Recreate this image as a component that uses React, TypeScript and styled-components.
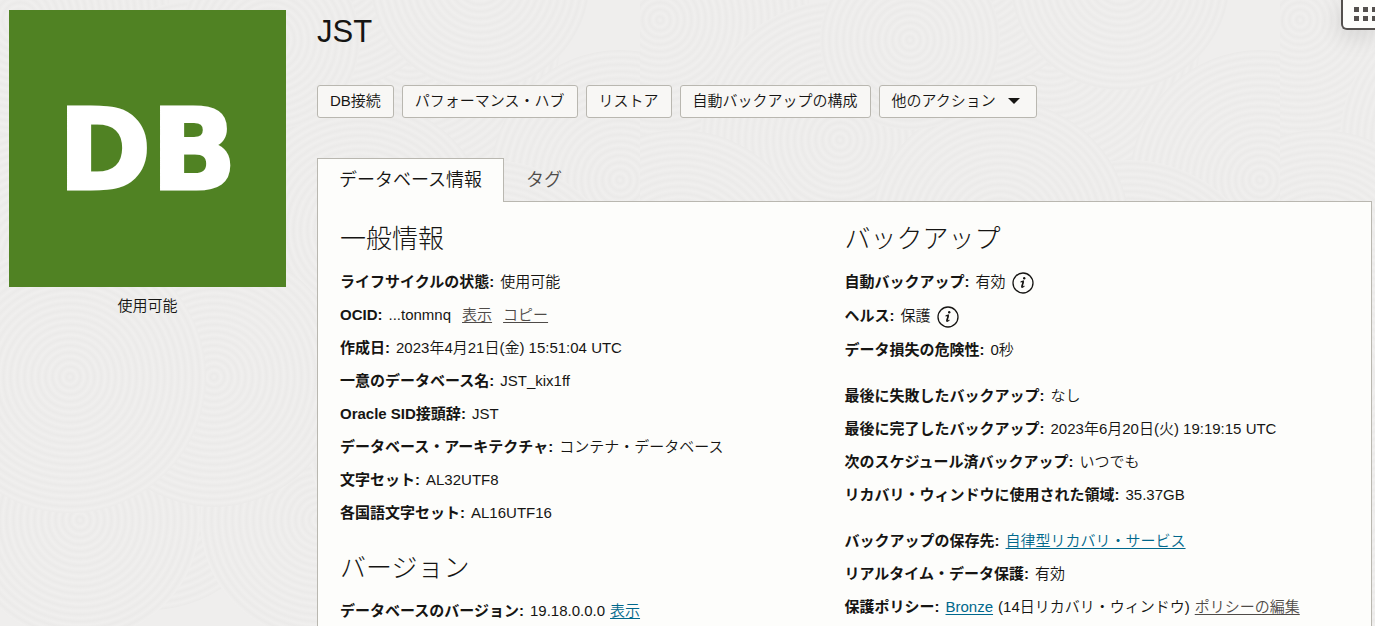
import React from 'react';
import styled, { createGlobalStyle } from 'styled-components';

type Disc = [number, number, number];

const DISCS: Disc[] = [
  [20, 20, 150], [410, 40, 150], [620, 180, 130], [330, -40, 130], [200, 140, 140],
  [490, 300, 140], [360, 230, 130], [40, 260, 130], [480, -20, 110], [150, 480, 130], [320, 520, 120],
  [80, 520, 120], [560, 500, 130], [430, 450, 120], [214, 377, 130], [70, 377, 136], [270, 40, 90],
];

const backdrop = `<svg xmlns="http://www.w3.org/2000/svg" width="640" height="626"><defs><radialGradient id="r" gradientUnits="userSpaceOnUse" cx="0" cy="0" r="7" spreadMethod="repeat"><stop offset="0" stop-color="#f0efee"/><stop offset=".5" stop-color="#ebeae9"/><stop offset="1" stop-color="#f0efee"/></radialGradient></defs>${DISCS.map(
  ([x, y, r]) => `<circle transform="translate(${x} ${y})" r="${r}" fill="url(#r)"/>`,
).join('')}</svg>`;

const GlobalStyle = createGlobalStyle`
  *, *::before, *::after { box-sizing: border-box; }
  body {
    margin: 0;
    color: #161513;
    background: #efeeed url("data:image/svg+xml,${encodeURIComponent(backdrop)}");
    font: 350 15px/33px "Liberation Sans", "Noto Sans CJK JP", sans-serif;
  }
  h1, h2, p, dl, dt, dd { margin: 0; }
`;

const Page = styled.div`
  display: grid;
  grid-template-columns: 277px minmax(0, 1fr);
  column-gap: 31px;
  padding: 10px 3px 0 9px;
`;

const Tile = styled.div`
  display: flex;
  align-items: center;
  justify-content: center;
  aspect-ratio: 1;
  padding-top: 2px;
  background: #508223;
  color: #fff;
  font: 700 112px/1 "DejaVu Sans", sans-serif;
  -webkit-text-stroke: 3px #fff;
`;

const Status = styled.p`
  padding-top: 2px;
  text-align: center;
`;

const Title = styled.h1`
  font-size: 31px;
  font-weight: 400;
  line-height: 44px;
`;

const Actions = styled.div`
  display: flex;
  gap: 8px;
  margin-top: 31px;
`;

const Button = styled.button`
  display: flex;
  align-items: center;
  gap: 12px;
  height: 33px;
  padding: 0 12px 2px;
  border: 1px solid #b9b7b0;
  border-radius: 3px;
  background: #f8f7f5;
  color: inherit;
  font: inherit;
  line-height: 29px;
`;

const Caret = styled.span`
  margin-right: 4px;
  border: 6px solid transparent;
  border-top-color: #161513;
  border-bottom: 0;
`;

const TabBar = styled.div`
  display: flex;
  margin-top: 40px;
`;

const Tab = styled.button<{ $active?: boolean }>`
  height: 44px;
  margin-bottom: -1px;
  padding: 0 21px;
  border: 1px solid ${(p) => (p.$active ? '#b9b7b0' : 'transparent')};
  border-bottom: 0;
  background: ${(p) => (p.$active ? '#fdfdfb' : 'transparent')};
  color: ${(p) => (p.$active ? '#161513' : '#4f4b48')};
  font: inherit;
  font-size: 18px;
`;

const Panel = styled.div`
  display: grid;
  grid-template-columns: 1fr 1fr;
  padding: 19px 22px 0;
  border: 1px solid #b9b7b0;
  border-bottom: 0;
  background: #fdfdfb;
`;

const Section = styled.section`
  & + & { margin-top: 21px; }
`;

const Heading = styled.h2`
  margin-bottom: 8px;
  font-size: 26px;
  font-weight: 300;
  line-height: 36px;
`;

const List = styled.dl`
  & + & { margin-top: 13px; }
`;

const Row = styled.div<{ $tall?: boolean }>`
  display: flex;
  gap: 6px;
  height: ${(p) => (p.$tall ? 34 : 33)}px;
  white-space: nowrap;
`;

const Term = styled.dt`
  font-weight: 700;
`;

const Detail = styled.dd`
  display: flex;
  gap: 5px;
`;

const Link = styled.a<{ $quiet?: boolean }>`
  color: ${(p) => (p.$quiet ? '#4f4b48' : '#00688c')};
  text-decoration: underline;
  text-underline-offset: 2px;
`;

const OcidLinks = styled.span`
  display: flex;
  gap: 11px;
  margin-left: 6px;
`;

const InfoButton = styled.button`
  display: flex;
  align-items: center;
  height: 36px;
  padding: 0;
  margin-left: 1px;
  border: 0;
  background: none;
  color: inherit;
`;

const Launcher = styled.button`
  position: fixed;
  top: 0;
  right: 0;
  width: 34px;
  height: 30px;
  padding: 0;
  border: 2px solid #54504e;
  border-width: 0 0 2px 2px;
  border-bottom-left-radius: 6px;
  background: #fdfdfb;
  box-shadow: 0 6px 24px rgba(0, 0, 0, 0.12);
  svg { display: block; }
`;

const Info = () => (
  <InfoButton aria-label="情報">
    <svg width="22" height="22" viewBox="0 0 22 22" fill="none" stroke="currentColor">
      <circle cx="11" cy="11" r="10" strokeWidth="1.3" />
      <circle cx="12.2" cy="6.2" r="1.2" fill="currentColor" stroke="none" />
      <path d="M8.6 10.2c.8-.6 1.7-.9 2.7-1.2L9.8 14.8c-.2 1.1 1 .7 2.6-1" strokeWidth="1.1" />
      <path d="M11.4 9.2L9.9 15" strokeWidth="1.5" />
    </svg>
  </InfoButton>
);

interface FieldProps {
  label: string;
  tall?: boolean;
  children: React.ReactNode;
}

const Field = ({ label, tall, children }: FieldProps) => (
  <Row $tall={tall}>
    <Term>{label}:</Term>
    <Detail>{children}</Detail>
  </Row>
);

export default function App() {
  return (
    <>
      <GlobalStyle />
      <Page>
        <aside>
          <Tile>DB</Tile>
          <Status>使用可能</Status>
        </aside>
        <main>
          <Title>JST</Title>
          <Actions>
            <Button>DB接続</Button>
            <Button>パフォーマンス・ハブ</Button>
            <Button>リストア</Button>
            <Button>自動バックアップの構成</Button>
            <Button aria-haspopup="menu">他のアクション<Caret /></Button>
          </Actions>
          <TabBar role="tablist">
            <Tab role="tab" aria-selected="true" $active>データベース情報</Tab>
            <Tab role="tab" aria-selected="false">タグ</Tab>
          </TabBar>
          <Panel role="tabpanel">
            <div>
              <Section>
                <Heading>一般情報</Heading>
                <List>
                  <Field label="ライフサイクルの状態">使用可能</Field>
                  <Field label="OCID">
                    ...tonmnq
                    <OcidLinks>
                      <Link href="#ocid" $quiet>表示</Link>
                      <Link href="#copy" $quiet>コピー</Link>
                    </OcidLinks>
                  </Field>
                  <Field label="作成日">2023年4月21日(金) 15:51:04 UTC</Field>
                  <Field label="一意のデータベース名">JST_kix1ff</Field>
                  <Field label="Oracle SID接頭辞">JST</Field>
                  <Field label="データベース・アーキテクチャ">コンテナ・データベース</Field>
                  <Field label="文字セット">AL32UTF8</Field>
                  <Field label="各国語文字セット">AL16UTF16</Field>
                </List>
              </Section>
              <Section>
                <Heading>バージョン</Heading>
                <List>
                  <Field label="データベースのバージョン">
                    19.18.0.0.0 <Link href="#version">表示</Link>
                  </Field>
                </List>
              </Section>
            </div>
            <Section>
              <Heading>バックアップ</Heading>
              <List>
                <Field label="自動バックアップ" tall>有効 <Info /></Field>
                <Field label="ヘルス" tall>保護 <Info /></Field>
                <Field label="データ損失の危険性">0秒</Field>
              </List>
              <List>
                <Field label="最後に失敗したバックアップ">なし</Field>
                <Field label="最後に完了したバックアップ">2023年6月20日(火) 19:19:15 UTC</Field>
                <Field label="次のスケジュール済バックアップ">いつでも</Field>
                <Field label="リカバリ・ウィンドウに使用された領域">35.37GB</Field>
              </List>
              <List>
                <Field label="バックアップの保存先">
                  <Link href="#service">自律型リカバリ・サービス</Link>
                </Field>
                <Field label="リアルタイム・データ保護">有効</Field>
                <Field label="保護ポリシー">
                  <Link href="#bronze">Bronze</Link> (14日リカバリ・ウィンドウ){' '}
                  <Link href="#policy" $quiet>ポリシーの編集</Link>
                </Field>
              </List>
            </Section>
          </Panel>
        </main>
      </Page>
      <Launcher aria-label="メニュー">
        <svg width="32" height="28" viewBox="0 0 32 28" fill="#54504e">
          {[7, 16].map((y) =>
            [11, 20, 29].map((x) => <rect key={`${x}-${y}`} x={x} y={y} width="5" height="5" />),
          )}
        </svg>
      </Launcher>
    </>
  );
}
